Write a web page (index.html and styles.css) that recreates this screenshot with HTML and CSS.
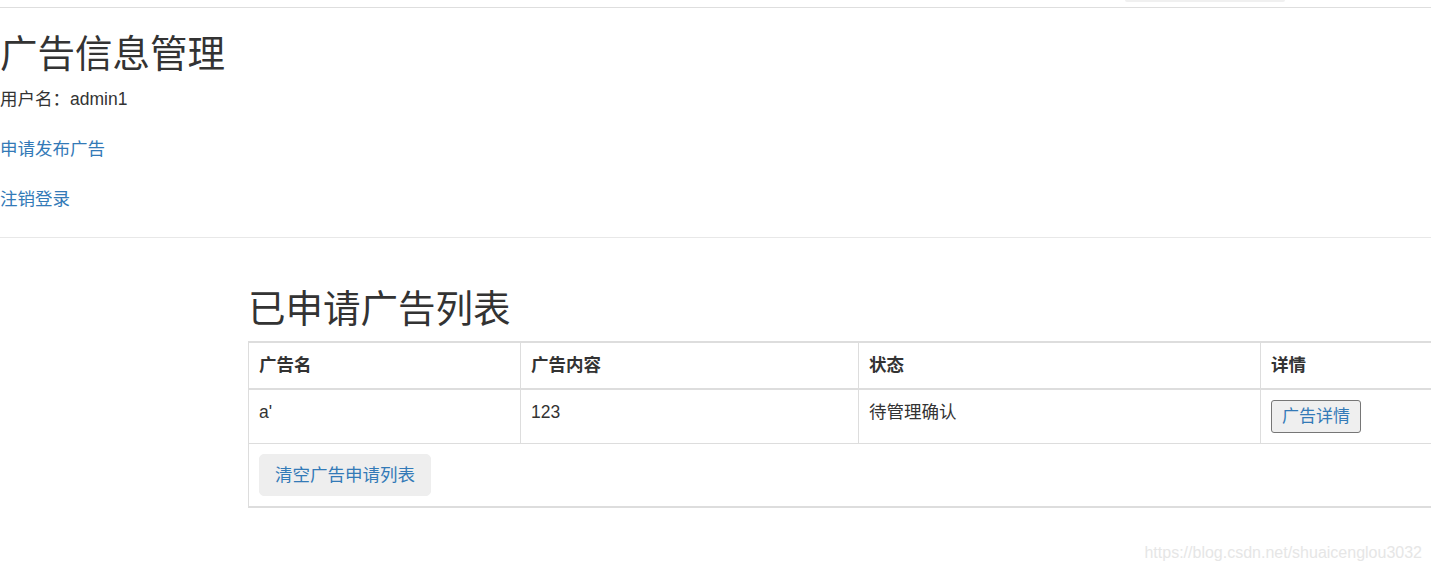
FILE: index.html
```html
<!DOCTYPE html>
<html lang="zh-CN">
<head>
    <meta charset="UTF-8">
    <meta name="viewport" content="width=device-width, initial-scale=1.0">
    <title>广告信息管理</title>
    <link rel="stylesheet" href="styles.css">
</head>
<body>
    <div class="topbar">
        <div class="topbar-tab"></div>
    </div>

    <div class="header">
        <h1 class="title">广告信息管理</h1>
        <p class="user">用户名：admin1</p>
        <p class="menu-item"><a href="#">申请发布广告</a></p>
        <p class="menu-item"><a href="#">注销登录</a></p>
    </div>

    <hr class="divider">

    <div class="list">
        <h2 class="title">已申请广告列表</h2>
        <table class="ad-table">
            <thead>
                <tr>
                    <th class="col-name">广告名</th>
                    <th class="col-content">广告内容</th>
                    <th class="col-state">状态</th>
                    <th class="col-detail">详情</th>
                </tr>
            </thead>
            <tbody>
                <tr>
                    <td>a'</td>
                    <td>123</td>
                    <td>待管理确认</td>
                    <td><button type="button" class="detail-btn">广告详情</button></td>
                </tr>
                <tr>
                    <td colspan="4" class="footer-cell"><a href="#" class="clear-btn">清空广告申请列表</a></td>
                </tr>
            </tbody>
        </table>
    </div>

    <div class="watermark">https://blog.csdn.net/shuaicenglou3032</div>
</body>
</html>
```

FILE: styles.css
```css
body {
    font-family: "Liberation Sans", Arial, "Noto Sans CJK SC", sans-serif;
    font-size: 17.5px;
    line-height: 25px;
    color: #333;
    background-color: #fff;
    margin: 0;
    padding: 0;
}
a {
    color: #337ab7;
    text-decoration: none;
}
p {
    margin: 0;
}
/* strip at the very top */
.topbar {
    height: 7px;
    border-bottom: 1px solid #dedede;
    display: flex;
}
.topbar-tab {
    margin-left: 1125px;
    width: 160px;
    height: 2px;
    background-color: #f0f0f0;
    border-radius: 0 0 6px 6px;
}
.title {
    font-size: 37.5px;
    line-height: 41px;
    font-weight: normal;
    margin: 0;
}
.header .title {
    margin: 26px 0 12px;
}
.user {
    margin-bottom: 25px;
}
.menu-item {
    margin-bottom: 25px;
}
.divider {
    border: 0;
    border-top: 1px solid #e8e8e8;
    margin: 0;
}
.list {
    padding-left: 248px;
    overflow: hidden;
}
.list .title {
    margin: 51px 0 11px;
}
.ad-table {
    border-collapse: collapse;
    table-layout: fixed;
    width: 1300px;
    border: 1px solid #ddd;
    border-top: 2px solid #ddd;
    border-bottom: 2px solid #ddd;
}
.ad-table th,
.ad-table td {
    border: 1px solid #ddd;
    padding: 10px;
    text-align: left;
    vertical-align: top;
}
.ad-table th {
    font-weight: bold;
    border-top: 2px solid #ddd;
    border-bottom: 2px solid #ddd;
}
.col-name {
    width: 251px;
}
.col-content {
    width: 317px;
}
.col-state {
    width: 381px;
}
.detail-btn {
    appearance: none;
    font-family: "Liberation Sans", Arial, "Noto Sans CJK SC", sans-serif;
    font-size: 17px;
    line-height: 27px;
    color: #337ab7;
    background-color: #efefef;
    border: 1px solid #767676;
    border-radius: 3px;
    padding: 2px 10px;
    vertical-align: top;
    margin: 0;
}
.footer-cell {
    padding-top: 11px;
}
.clear-btn {
    display: inline-block;
    padding: 7.5px 15px;
    line-height: 25px;
    background-color: #eee;
    border: 1px solid #eee;
    border-radius: 5px;
}
.watermark {
    position: absolute;
    top: 544px;
    right: 9px;
    font-size: 16px;
    line-height: 18px;
    color: #e6e6e6;
}
```
